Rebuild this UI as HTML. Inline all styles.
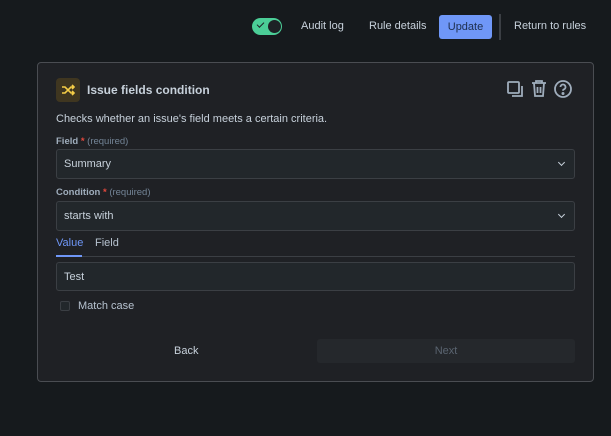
<!DOCTYPE html>
<html><head><style>
*{box-sizing:border-box;margin:0;padding:0}
body{width:611px;height:436px;background:#161a1d;font-family:"Liberation Sans",sans-serif;color:#b6c2cf;font-size:11px;position:relative;overflow:hidden}
.a{position:absolute}
.card{left:37px;top:62px;width:557px;height:320px;background:#1f2125;border:1px solid #4a4d52;border-radius:4px}
.sel{left:56px;width:519px;height:30px;background:#22272b;border:1px solid #3b3f44;border-radius:3px;padding-left:7px;line-height:28px;color:#c7d1db}
.lbl{left:56px;font-size:9.5px;color:#9fadbc;font-weight:bold}
.lbl span{color:#e2483d}.lbl i{font-style:normal;font-weight:normal;color:#738496}
.chev{position:absolute;right:10px;top:10px;width:5px;height:5px;border-right:1.5px solid #c7d1db;border-bottom:1.5px solid #c7d1db;transform:rotate(45deg)}
</style></head><body>
<div class="a" style="left:252px;top:18px;width:30px;height:17px;background:#4bce97;border-radius:9px"></div>
<div class="a" style="left:268px;top:20px;width:13px;height:13px;background:#1d2125;border-radius:50%"></div>
<div class="a" style="left:257px;top:22px;width:7px;height:4px;border-left:1.5px solid #1d2125;border-bottom:1.5px solid #1d2125;transform:rotate(-45deg)"></div>
<div class="a" style="left:301px;top:20px;color:#c7d1db">Audit log</div>
<div class="a" style="left:369px;top:20px;color:#c7d1db">Rule details</div>
<div class="a" style="left:439px;top:15px;width:53px;height:24px;background:#6f97f7;border-radius:3px;color:#1d2e4d;text-align:center;line-height:24px">Update</div>
<div class="a" style="left:499px;top:14px;width:2px;height:26px;background:#3b3f44"></div>
<div class="a" style="left:514px;top:20px;color:#c7d1db">Return to rules</div>
<div class="a card"></div>
<div class="a" style="left:56px;top:78px;width:24px;height:24px;background:#3f3620;border-radius:4px"></div>
<svg class="a" style="left:60px;top:82px" width="16" height="16" viewBox="0 0 16 16" fill="none" stroke="#f5cd47" stroke-width="1.6"><path d="M2 5h3l6 6h3M2 11h3l6-6h3M12 3l2 2-2 2M12 9l2 2-2 2"/></svg>
<div class="a" style="left:87px;top:83px;font-weight:bold;font-size:12px;color:#c7d1db">Issue fields condition</div>
<svg class="a" style="left:506px;top:80px" width="18" height="18" viewBox="0 0 18 18" fill="none" stroke="#9fadbc" stroke-width="1.8"><rect x="2" y="2" width="11" height="11" rx="1"/><path d="M16 6v10H6"/></svg>
<svg class="a" style="left:530px;top:79px" width="18" height="19" viewBox="0 0 18 19" fill="none" stroke="#9fadbc" stroke-width="1.8"><path d="M2 4h14M6 4V2h6v2M4 4l1 13h8l1-13M7.5 8v6M10.5 8v6"/></svg>
<svg class="a" style="left:553px;top:79px" width="20" height="20" viewBox="0 0 20 20" fill="none" stroke="#9fadbc" stroke-width="1.8"><circle cx="10" cy="10" r="8"/><path d="M7.5 8a2.5 2.5 0 1 1 3.5 2.3c-.7.3-1 .8-1 1.5"/><circle cx="10" cy="14.5" r=".6" fill="#9fadbc"/></svg>
<div class="a" style="left:56px;top:113px;color:#c7d1db;font-size:11px">Checks whether an issue's field meets a certain criteria.</div>
<div class="a lbl" style="top:136px">Field <span>*</span> <i>(required)</i></div>
<div class="a sel" style="top:149px">Summary<div class="chev"></div></div>
<div class="a lbl" style="top:187px">Condition <span>*</span> <i>(required)</i></div>
<div class="a sel" style="top:201px">starts with<div class="chev"></div></div>
<div class="a" style="left:56px;top:237px;color:#6f97f7">Value</div>
<div class="a" style="left:95px;top:237px;color:#b6c2cf">Field</div>
<div class="a" style="left:56px;top:256px;width:519px;height:1px;background:#3b3f44"></div>
<div class="a" style="left:56px;top:255px;width:26px;height:2px;background:#6f97f7"></div>
<div class="a sel" style="top:262px;height:29px">Test</div>
<div class="a" style="left:60px;top:301px;width:10px;height:10px;border:1px solid #3b3f44;border-radius:2px;background:#22272b"></div>
<div class="a" style="left:78px;top:300px;color:#b6c2cf">Match case</div>
<div class="a" style="left:174px;top:345px;color:#c7d1db">Back</div>
<div class="a" style="left:317px;top:339px;width:258px;height:24px;background:#25282c;border-radius:3px;text-align:center;line-height:24px;color:#5a6470">Next</div>
</body></html>
